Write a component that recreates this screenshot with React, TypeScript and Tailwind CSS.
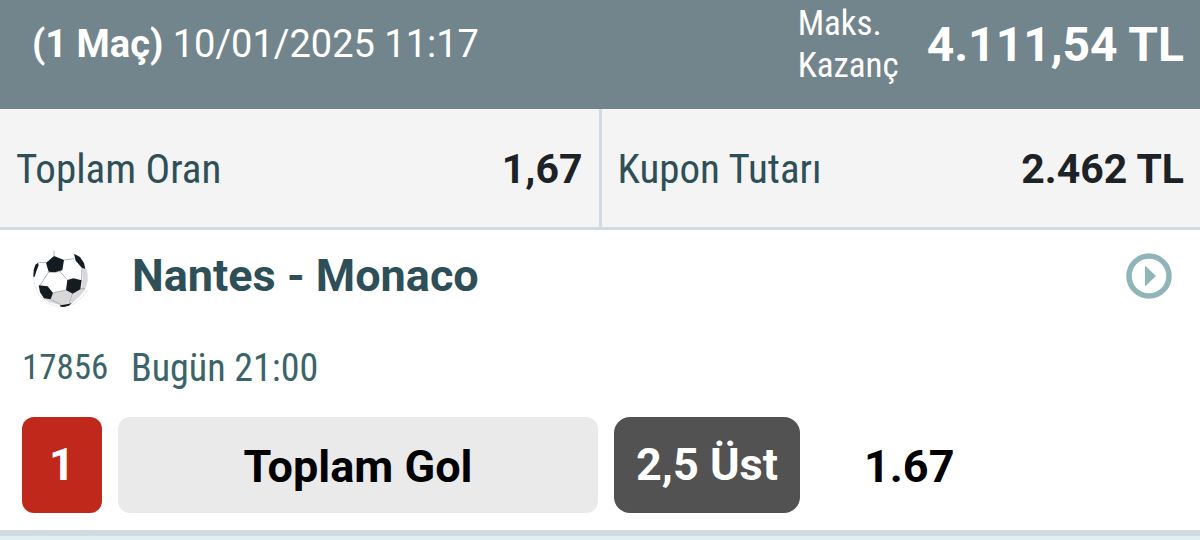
interface Bet {
  code: string
  teams: string
  time: string
  banko: number
  market: string
  pick: string
  odds: string
}

const bets: Bet[] = [
  {
    code: '17856',
    teams: 'Nantes - Monaco',
    time: 'Bugün 21:00',
    banko: 1,
    market: 'Toplam Gol',
    pick: '2,5 Üst',
    odds: '1.67',
  },
]

const condensed = "font-['Roboto_Condensed','Liberation_Sans_Narrow',Roboto,sans-serif]"

function Football() {
  return (
    <svg viewBox="36 32 171 171" className="h-[57px] w-[57px]" aria-hidden="true">
      <path d="M96 160l44-8 18 12-10 28-26 6-36-10-20-14z" fill="#d8d8da" />
      <path d="M186 88l12-2 5 18 0 22-8 26-17 20-22 20-6-2 12-32 22-13 4-27z" fill="#d8d8da" />
      <g fill="none" stroke="#a4a8ab" strokeWidth="2.5">
        <path d="M102 34v16M78 70l-22-1M132 62l30-4M126 92l-6 5-34 2M120 97l22 24M86 98l-26 40M186 86l-2 38M140 152l-40 8M158 162l-10 30M181 149l14-2M93 180l30 16" />
        <path d="M40 112l4 26 14 30 22 22 24 10 28 2 30-8 24-20 16-22" stroke="#e6e7e8" />
      </g>
      <path d="M78 71l24-21 30 12-5 30-22 7-19-2z" fill="#141c22" />
      <path d="M142 122l18-5 25 6-4 27-23 13-20-11z" fill="#141c22" />
      <path d="M56 138l27 3 16 20-7 19-20-3-12-18z" fill="#141c22" />
      <path d="M162 43l18 10 12 18 4 17-10-2-19-22z" fill="#141c22" />
      <path d="M54 70l2 8-7 18-5 16-4 0 1-20 5-16z" fill="#141c22" />
      <path d="M120 198l24-4 12-3-10 8-14 4-10-1z" fill="#141c22" />
    </svg>
  )
}

function PlayIcon() {
  return (
    <svg viewBox="0 0 46 46" className="h-[46px] w-[46px]" aria-hidden="true">
      <circle cx="23" cy="23" r="20" fill="none" stroke="#8fb5b8" strokeWidth="5.5" />
      <path d="M19 12.5v21L30 23z" fill="#8fb5b8" />
    </svg>
  )
}

function BetRow({ bet }: { bet: Bet }) {
  return (
    <article className="border-b-[6px] border-[#cfdbe0] bg-white px-[22px] pt-[18px] pb-[17px]">
      <div className="flex h-14 items-center">
        <div className="w-[110px] shrink-0 pt-1 pl-[10px]">
          <Football />
        </div>
        <h2 className="flex-1 text-[45px] leading-[52px] font-bold text-[#2e4f58]">{bet.teams}</h2>
        <button type="button" aria-label="Maç detayı" className="mr-[6px] cursor-pointer">
          <PlayIcon />
        </button>
      </div>

      <div className={`mt-[38px] flex h-[52px] items-center text-[#3b6469] ${condensed}`}>
        <span className="w-[109px] shrink-0 text-[35px]">{bet.code}</span>
        <span className="text-[38px]">{bet.time}</span>
      </div>

      <div className="mt-[23px] grid h-24 grid-cols-[80px_480fr_186px_362fr] gap-4 text-[45px] font-bold">
        <span className="flex items-center justify-center rounded-xl bg-[#c1281c] text-white">
          {bet.banko}
        </span>
        <span className="flex items-center justify-center rounded-xl bg-[#eaeaea] pt-1 text-black">
          {bet.market}
        </span>
        <span className="flex items-center justify-center rounded-2xl bg-[#525252] text-white">
          {bet.pick}
        </span>
        <span className="flex items-center pt-1 pl-12 text-black">{bet.odds}</span>
      </div>
    </article>
  )
}

export default function App() {
  return (
    <main className="min-h-screen bg-[#e3eef2] font-[Roboto,sans-serif]">
      <header className="flex h-[109px] justify-between bg-[#73858c] pr-4 pl-8 text-white">
        <p className="pt-5 text-[38px] leading-[48px]">
          <b>(1 Maç)</b> 10/01/2025 11:17
        </p>
        <div className="flex">
          <p className={`w-[129px] pt-[3px] text-[35px] leading-[42px] ${condensed}`}>
            Maks.
            <br />
            Kazanç
          </p>
          <p className="pt-[17px] text-[48px] leading-[56px] font-bold">4.111,54 TL</p>
        </div>
      </header>

      <dl className="grid grid-cols-2 gap-[3px] border-b-[3px] border-[#cfdbe0] bg-[#cfdbe0] text-[41px]">
        <div className="flex h-[118px] items-center justify-between bg-[#f4f4f4] px-4 pt-1">
          <dt className={`text-[#2e4f58] ${condensed}`}>Toplam Oran</dt>
          <dd className="font-bold text-[#1c2226]">1,67</dd>
        </div>
        <div className="flex h-[118px] items-center justify-between bg-[#f4f4f4] px-4 pt-1">
          <dt className={`text-[#2e4f58] ${condensed}`}>Kupon Tutarı</dt>
          <dd className="font-bold text-[#1c2226]">2.462 TL</dd>
        </div>
      </dl>

      {bets.map(bet => (
        <BetRow key={bet.code} bet={bet} />
      ))}
    </main>
  )
}
